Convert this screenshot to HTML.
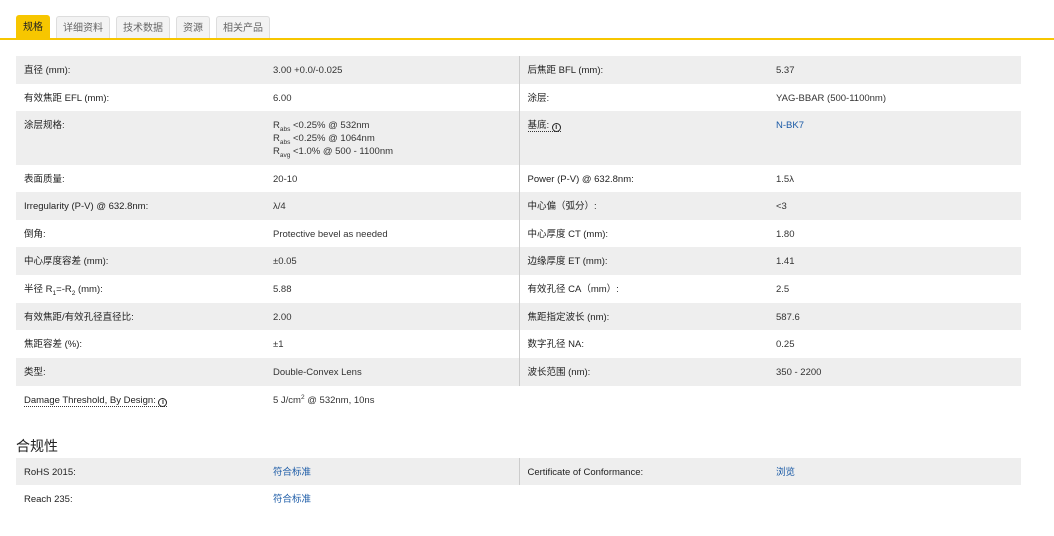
<!DOCTYPE html>
<html><head><meta charset="utf-8"><style>
*{margin:0;padding:0;box-sizing:border-box}
body{width:1054px;height:536px;background:#fff;font-family:"Liberation Sans","Noto Sans CJK SC",sans-serif;font-size:9.5px;color:#333;position:relative;overflow:hidden}
.tab{position:absolute;top:16px;height:23px;border:1px solid #ddd;border-bottom:none;background:#f3f3f3;border-radius:3px 3px 0 0;font-size:10px;color:#666;line-height:24px;text-align:center}
.tab.a{background:#f7c600;border-color:#f7c600;color:#222;top:15px;height:24px}
.line{position:absolute;left:0;top:38px;width:1054px;height:2px;background:#f7c600}
table{position:absolute;left:16px;width:1005px;border-collapse:collapse;table-layout:fixed}
td{vertical-align:top;padding:9px 8px 0 8px;line-height:11px;white-space:nowrap}
td:nth-child(1),td:nth-child(3){color:#222}
tr.g td{background:#eee}
td.c3{border-left:1px solid #ccc}
a{color:#1a5aa6;text-decoration:none}
.dot{border-bottom:1px dotted #333}
.i{display:inline-block;width:9px;height:9px;border:1.3px solid #222;border-radius:50%;font-size:7px;line-height:7px;text-align:center;font-weight:bold;vertical-align:-1px}
sub,sup{font-size:6.5px;line-height:0}
h3{position:absolute;left:16px;top:436px;font-size:14px;font-weight:normal;color:#222}
</style></head><body>
<div class="tab a" style="left:16px;width:34px">规格</div>
<div class="tab" style="left:56px;width:54px">详细资料</div>
<div class="tab" style="left:116px;width:54px">技术数据</div>
<div class="tab" style="left:176px;width:34px">资源</div>
<div class="tab" style="left:216px;width:54px">相关产品</div>
<div class="line"></div>
<table style="top:56px">
<colgroup><col style="width:249px"><col style="width:254px"><col style="width:249px"><col style="width:253px"></colgroup>
<tr class="g" style="height:28px"><td>直径 (mm):</td><td>3.00 +0.0/-0.025</td><td class="c3">后焦距 BFL (mm):</td><td>5.37</td></tr>
<tr style="height:27px"><td>有效焦距 EFL (mm):</td><td>6.00</td><td class="c3">涂层:</td><td>YAG-BBAR (500-1100nm)</td></tr>
<tr class="g" style="height:54px"><td>涂层规格:</td><td style="line-height:13px;padding-top:8px">R<sub>abs</sub> &lt;0.25% @ 532nm<br>R<sub>abs</sub> &lt;0.25% @ 1064nm<br>R<sub>avg</sub> &lt;1.0% @ 500 - 1100nm</td><td class="c3"><span class="dot">基底: <span class="i">i</span></span></td><td><a>N-BK7</a></td></tr>
<tr style="height:27px"><td>表面质量:</td><td>20-10</td><td class="c3">Power (P-V) @ 632.8nm:</td><td>1.5λ</td></tr>
<tr class="g" style="height:28px"><td>Irregularity (P-V) @ 632.8nm:</td><td>λ/4</td><td class="c3">中心偏（弧分）:</td><td>&lt;3</td></tr>
<tr style="height:27px"><td>倒角:</td><td>Protective bevel as needed</td><td class="c3">中心厚度 CT (mm):</td><td>1.80</td></tr>
<tr class="g" style="height:28px"><td>中心厚度容差 (mm):</td><td>±0.05</td><td class="c3">边缘厚度 ET (mm):</td><td>1.41</td></tr>
<tr style="height:28px"><td>半径 R<sub>1</sub>=-R<sub>2</sub> (mm):</td><td>5.88</td><td class="c3">有效孔径 CA（mm）:</td><td>2.5</td></tr>
<tr class="g" style="height:27px"><td>有效焦距/有效孔径直径比:</td><td>2.00</td><td class="c3">焦距指定波长 (nm):</td><td>587.6</td></tr>
<tr style="height:28px"><td>焦距容差 (%):</td><td>±1</td><td class="c3">数字孔径 NA:</td><td>0.25</td></tr>
<tr class="g" style="height:28px"><td>类型:</td><td>Double-Convex Lens</td><td class="c3">波长范围 (nm):</td><td>350 - 2200</td></tr>
<tr style="height:28px"><td><span class="dot">Damage Threshold, By Design: <span class="i">i</span></span></td><td>5 J/cm<sup>2</sup> @ 532nm, 10ns</td><td></td><td></td></tr>
</table>
<h3>合规性</h3>
<table style="top:458px">
<colgroup><col style="width:249px"><col style="width:254px"><col style="width:249px"><col style="width:253px"></colgroup>
<tr class="g" style="height:27px"><td>RoHS 2015:</td><td><a>符合标准</a></td><td class="c3">Certificate of Conformance:</td><td><a>浏览</a></td></tr>
<tr style="height:28px"><td>Reach 235:</td><td><a>符合标准</a></td><td></td><td></td></tr>
</table>
</body></html>
